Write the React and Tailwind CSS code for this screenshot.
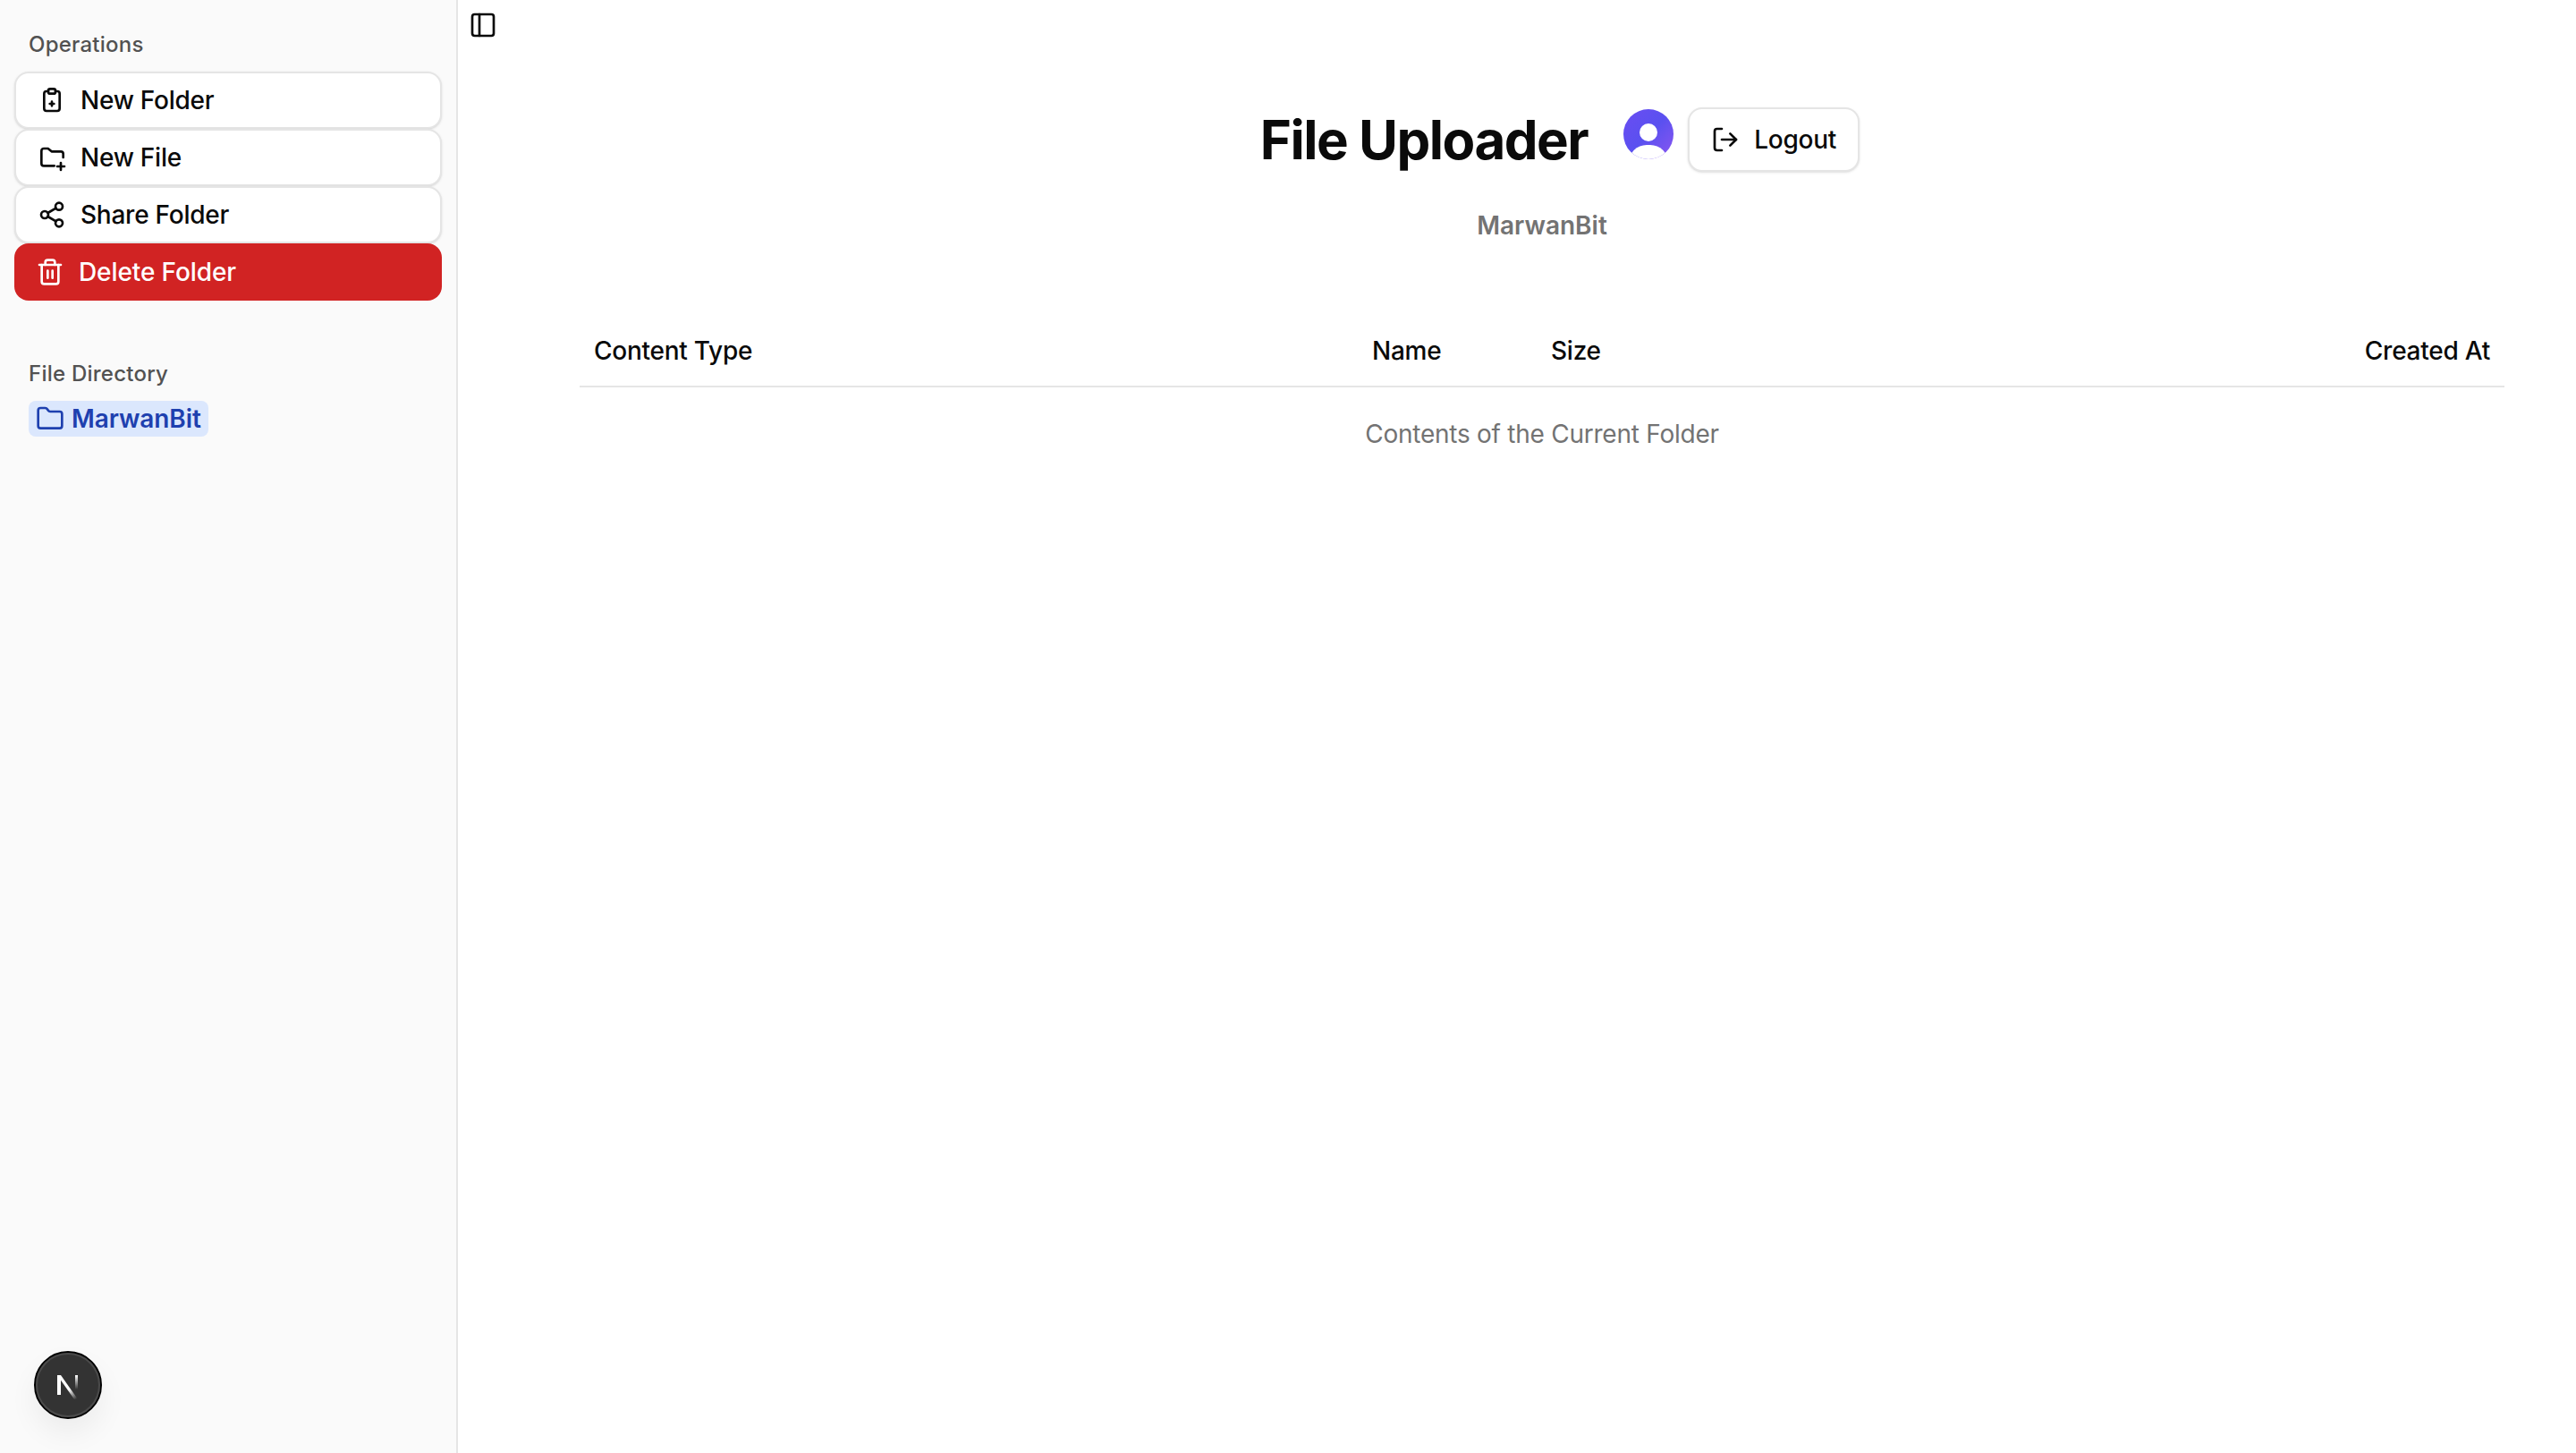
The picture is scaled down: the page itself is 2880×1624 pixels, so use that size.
import { Share2, Trash2, Folder, PanelLeft, LogOut } from 'lucide-react'

const font = { fontFamily: 'Inter, sans-serif' }

function ClipboardAdd() {
  return (
    <svg width="32" height="32" viewBox="0 0 24 24" fill="none" stroke="currentColor" strokeWidth="2" strokeLinecap="round" strokeLinejoin="round" className="shrink-0">
      <path d="M9 4.5H7.5a2 2 0 0 0-2 2V19a2 2 0 0 0 2 2h9a2 2 0 0 0 2-2V6.5a2 2 0 0 0-2-2H15" />
      <rect x="9" y="2.5" width="6" height="4" rx="1.5" />
      <path d="M10.25 15h3.5M12 13.25v3.5" />
    </svg>
  )
}

function FolderAdd() {
  return (
    <svg width="32" height="32" viewBox="0 0 24 24" fill="none" stroke="currentColor" strokeWidth="2" strokeLinecap="round" strokeLinejoin="round" className="shrink-0">
      <path d="M14 19H5.25a2 2 0 0 1-2-2V6.5a2 2 0 0 1 2-2h3.5l3 2.5h7.75a2 2 0 0 1 2 2v3" />
      <path d="M16.5 19.5h6" />
      <path d="M19.5 16.5v6" />
    </svg>
  )
}

function NextLogo() {
  return (
    <svg width="32" height="32" viewBox="0 0 32 32" fill="none" className="overflow-visible relative">
      <defs>
        <linearGradient id="n-diag" x1="6" y1="5" x2="25" y2="32" gradientUnits="userSpaceOnUse">
          <stop offset="0.6" stopColor="#fff" />
          <stop offset="1" stopColor="#fff" stopOpacity="0" />
        </linearGradient>
        <linearGradient id="n-right" x1="25" y1="5" x2="25" y2="21" gradientUnits="userSpaceOnUse">
          <stop stopColor="#fff" />
          <stop offset="1" stopColor="#fff" stopOpacity="0" />
        </linearGradient>
      </defs>
      <rect x="4" y="5" width="4" height="22" fill="#fff" />
      <path d="M4 5h4l19 27h-4z" fill="url(#n-diag)" />
      <rect x="24" y="5" width="3" height="16" fill="url(#n-right)" />
    </svg>
  )
}

function OpButton({ icon, label }) {
  return (
    <button className="flex items-center gap-4 h-16 w-full px-6 text-[28px] tracking-[-0.25px] font-medium text-[#0a0a0a] bg-white border-2 border-[#e5e5e5] rounded-2xl shadow-sm">
      {icon}
      <span>{label}</span>
    </button>
  )
}

export default function App() {
  return (
    <div className="relative flex h-screen bg-white text-[#0a0a0a] overflow-hidden" style={font}>
      {/* Sidebar */}
      <aside className="flex flex-col w-[512px] shrink-0 bg-[#fafafa] border-r-2 border-[#e5e5e5] px-4 pt-[34px]">
        <p className="px-4 text-2xl leading-8 tracking-[0.01em] font-medium text-[#525252]">Operations</p>
        <div className="flex flex-col mt-[14px]">
          <OpButton icon={<ClipboardAdd />} label="New Folder" />
          <OpButton icon={<FolderAdd />} label="New File" />
          <OpButton icon={<Share2 size={32} className="shrink-0" />} label="Share Folder" />
          <button className="flex items-center gap-4 h-16 w-full px-6 text-[28px] tracking-[-0.1px] font-medium text-white bg-[#d12323] rounded-2xl">
            <Trash2 size={32} />
            <span>Delete Folder</span>
          </button>
        </div>

        <p className="px-4 mt-[66px] text-2xl leading-8 tracking-[0.01em] font-medium text-[#525252]">File Directory</p>
        <div className="px-4 mt-[14px]">
          <div className="inline-flex items-center gap-2 h-10 px-2 bg-[#dbe7fd] text-[#1e40af] rounded-lg text-[28px] tracking-[-0.1px] font-semibold">
            <Folder size={32} />
            <span>MarwanBit</span>
          </div>
        </div>
      </aside>

      {/* Main */}
      <main className="flex flex-1 min-w-0">
        <div className="w-14 shrink-0 pt-3 pl-3">
          <PanelLeft size={32} />
        </div>
        <div className="flex-1 min-w-0 pl-20 pr-20">
          <div className="flex items-start justify-center pl-10 pt-[120px]">
            <h1 className="text-6xl leading-[72px] font-bold tracking-tight mr-10">File Uploader</h1>
            <div className="relative w-14 h-14 mr-4 mt-0.5 rounded-full overflow-hidden bg-gradient-to-br from-[#6a4df2] via-[#5a50f0] to-[#8a55f0]">
              <div className="absolute left-[18px] top-[16px] w-5 h-5 rounded-full bg-white" />
              <div className="absolute left-[6px] top-[40px] w-11 h-10 rounded-full bg-white" />
            </div>
            <button className="flex items-center gap-4 h-[72px] px-6 text-[28px] tracking-[-0.25px] font-medium bg-white border-2 border-[#e5e5e5] rounded-2xl shadow-sm">
              <LogOut size={32} />
              <span>Logout</span>
            </button>
          </div>

          <p className="mt-10 text-center text-[28px] leading-10 font-semibold text-[#737373]">MarwanBit</p>

          <table className="w-full mt-[80px] table-fixed caption-bottom text-[28px] tracking-[-0.25px]">
            <caption className="mt-8 text-center text-[#737373] leading-10">Contents of the Current Folder</caption>
            <thead>
              <tr className="border-b-2 border-[#e5e5e5]">
                <th className="w-[870px] h-20 px-4 text-left font-medium">Content Type</th>
                <th className="w-[200px] h-20 px-4 text-left font-medium">Name</th>
                <th className="h-20 px-4 text-left font-medium">Size</th>
                <th className="w-[400px] h-20 px-4 text-right font-medium">Created At</th>
              </tr>
            </thead>
          </table>
        </div>
      </main>

      {/* Next.js dev badge */}
      <div className="absolute left-[38px] top-[1510px] flex items-center justify-center w-[76px] h-[76px] rounded-full bg-[#333333] border-2 border-black shadow-[0_16px_32px_rgba(0,0,0,0.06)]">
        <div className="absolute inset-0 rounded-full border-2 border-[#4a4a4a]" />
        <NextLogo />
      </div>
    </div>
  )
}
